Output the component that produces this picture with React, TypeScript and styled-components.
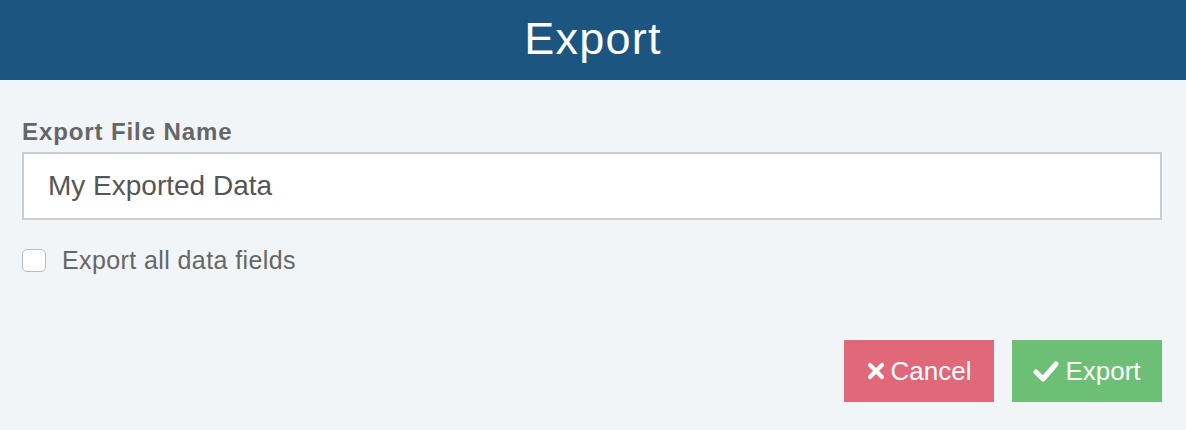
import React, { useState } from 'react';
import styled, { createGlobalStyle } from 'styled-components';

const GlobalStyle = createGlobalStyle`
  html, body {
    margin: 0;
    padding: 0;
    background: #f2f5f8;
    font-family: "Liberation Sans", Arial, sans-serif;
  }
`;

const Dialog = styled.div`
  width: 1186px;
  height: 430px;
  display: flex;
  flex-direction: column;
  background: #f2f5f8;
`;

const Header = styled.header`
  height: 80px;
  background: #1b5580;
  display: flex;
  align-items: center;
  justify-content: center;
`;

const Title = styled.h1`
  margin: 0;
  color: #ffffff;
  font-size: 45px;
  font-weight: 400;
  letter-spacing: 1.2px;
  line-height: 1;
  padding-bottom: 4px;
`;

const Body = styled.div`
  flex: 1;
  display: flex;
  flex-direction: column;
  padding: 40px 24px 28px 22px;
`;

const Label = styled.label`
  display: block;
  color: #666666;
  font-size: 24px;
  font-weight: 700;
  letter-spacing: 0.9px;
  line-height: 24px;
  margin-bottom: 8px;
`;

const TextInput = styled.input`
  box-sizing: border-box;
  width: 1140px;
  height: 68px;
  border: 2px solid #cccccc;
  background: #ffffff;
  padding: 0 24px;
  font-family: inherit;
  font-size: 28px;
  color: #555555;
  outline: none;
`;

const CheckRow = styled.label`
  display: flex;
  align-items: center;
  gap: 16px;
  margin-top: 28px;
  height: 24px;
  color: #666666;
  font-size: 25px;
  letter-spacing: 0.4px;
`;

const Box = styled.input`
  appearance: none;
  margin: 0;
  width: 24px;
  height: 23px;
  border: 1px solid #bbbbbb;
  border-radius: 5px;
  background: #ffffff;
`;

const Actions = styled.div`
  margin-top: auto;
  display: flex;
  justify-content: flex-end;
  gap: 18px;
`;

const Button = styled.button<{ $tone: 'cancel' | 'ok' }>`
  width: 150px;
  height: 62px;
  border: none;
  background: ${p => (p.$tone === 'cancel' ? '#e06878' : '#6cbf74')};
  color: #ffffff;
  font-family: inherit;
  font-size: 26px;
  display: flex;
  align-items: center;
  justify-content: center;
  gap: 6px;
  padding: 0;
  cursor: pointer;
`;

const CrossIcon = () => (
  <svg width="18" height="18" viewBox="0 0 18 18">
    <path d="M3 3 L15 15 M15 3 L3 15" stroke="#fff" strokeWidth="4.2" strokeLinecap="round" />
  </svg>
);

const CheckIcon = () => (
  <svg width="26" height="22" viewBox="0 0 26 22">
    <path d="M3 12 L10 19 L23 4" stroke="#fff" strokeWidth="5" fill="none" strokeLinecap="round" strokeLinejoin="round" />
  </svg>
);

export default function App() {
  const [name, setName] = useState('My Exported Data');
  const [all, setAll] = useState(false);

  return (
    <>
      <GlobalStyle />
      <Dialog>
        <Header>
          <Title>Export</Title>
        </Header>
        <Body>
          <Label htmlFor="fname">Export File Name</Label>
          <TextInput id="fname" value={name} onChange={e => setName(e.target.value)} />
          <CheckRow>
            <Box type="checkbox" checked={all} onChange={e => setAll(e.target.checked)} />
            Export all data fields
          </CheckRow>
          <Actions>
            <Button $tone="cancel"><CrossIcon />Cancel</Button>
            <Button $tone="ok"><CheckIcon />Export</Button>
          </Actions>
        </Body>
      </Dialog>
    </>
  );
}
